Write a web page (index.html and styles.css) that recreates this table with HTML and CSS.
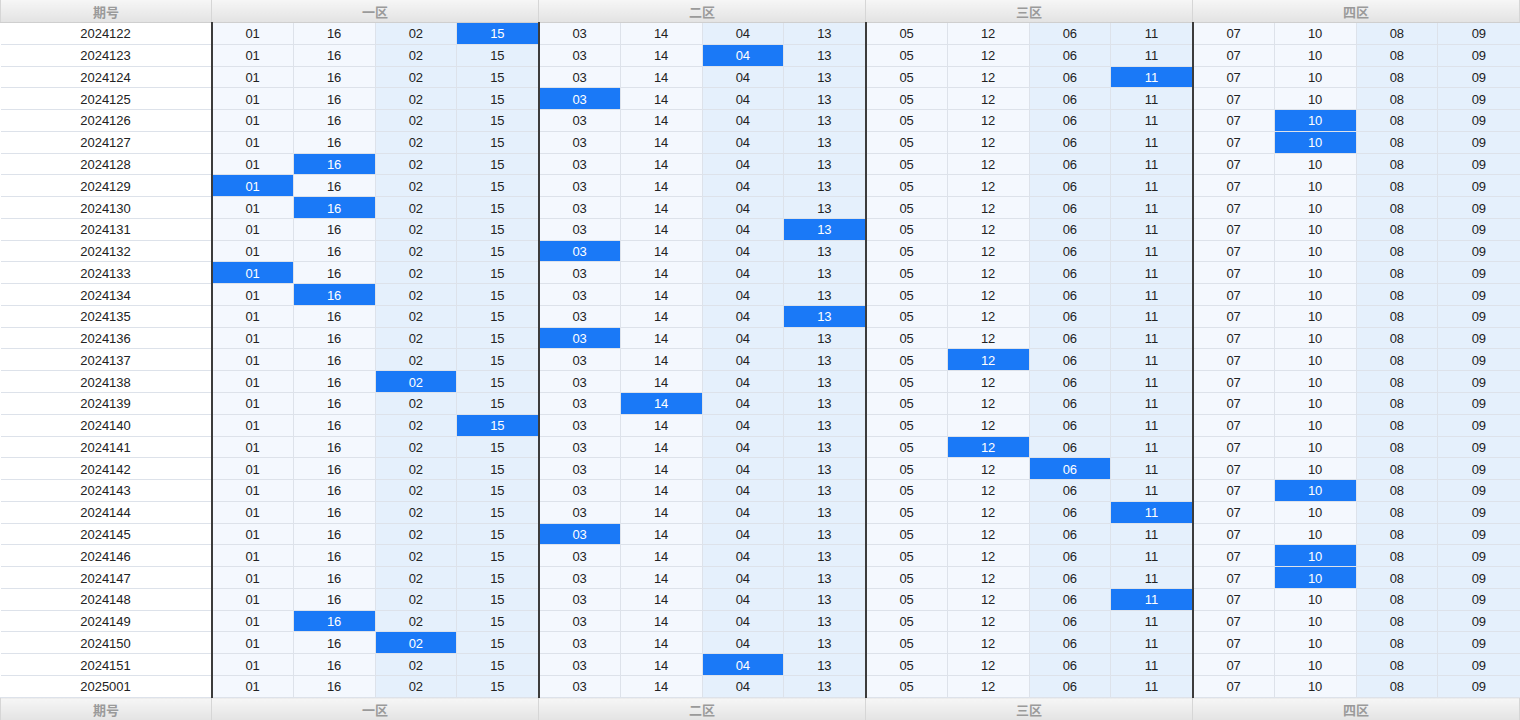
FILE: index.html
```html
<!DOCTYPE html>
<html lang="zh">
<head>
<meta charset="utf-8">
<title>走势表</title>
<link rel="stylesheet" href="styles.css">
</head>
<body>
<table class="grid">
<colgroup><col class="c-issue"><col span="16"></colgroup>
<thead>
<tr><th>期号</th><th colspan="4" class="zone">一区</th><th colspan="4" class="zone">二区</th><th colspan="4" class="zone">三区</th><th colspan="4" class="zone">四区</th></tr>
</thead>
<tbody>
<tr><td>2024122</td><td>01</td><td>16</td><td>02</td><td class="hit">15</td><td>03</td><td>14</td><td>04</td><td>13</td><td>05</td><td>12</td><td>06</td><td>11</td><td>07</td><td>10</td><td>08</td><td>09</td></tr>
<tr><td>2024123</td><td>01</td><td>16</td><td>02</td><td>15</td><td>03</td><td>14</td><td class="hit">04</td><td>13</td><td>05</td><td>12</td><td>06</td><td>11</td><td>07</td><td>10</td><td>08</td><td>09</td></tr>
<tr><td>2024124</td><td>01</td><td>16</td><td>02</td><td>15</td><td>03</td><td>14</td><td>04</td><td>13</td><td>05</td><td>12</td><td>06</td><td class="hit">11</td><td>07</td><td>10</td><td>08</td><td>09</td></tr>
<tr><td>2024125</td><td>01</td><td>16</td><td>02</td><td>15</td><td class="hit">03</td><td>14</td><td>04</td><td>13</td><td>05</td><td>12</td><td>06</td><td>11</td><td>07</td><td>10</td><td>08</td><td>09</td></tr>
<tr><td>2024126</td><td>01</td><td>16</td><td>02</td><td>15</td><td>03</td><td>14</td><td>04</td><td>13</td><td>05</td><td>12</td><td>06</td><td>11</td><td>07</td><td class="hit">10</td><td>08</td><td>09</td></tr>
<tr><td>2024127</td><td>01</td><td>16</td><td>02</td><td>15</td><td>03</td><td>14</td><td>04</td><td>13</td><td>05</td><td>12</td><td>06</td><td>11</td><td>07</td><td class="hit">10</td><td>08</td><td>09</td></tr>
<tr><td>2024128</td><td>01</td><td class="hit">16</td><td>02</td><td>15</td><td>03</td><td>14</td><td>04</td><td>13</td><td>05</td><td>12</td><td>06</td><td>11</td><td>07</td><td>10</td><td>08</td><td>09</td></tr>
<tr><td>2024129</td><td class="hit">01</td><td>16</td><td>02</td><td>15</td><td>03</td><td>14</td><td>04</td><td>13</td><td>05</td><td>12</td><td>06</td><td>11</td><td>07</td><td>10</td><td>08</td><td>09</td></tr>
<tr><td>2024130</td><td>01</td><td class="hit">16</td><td>02</td><td>15</td><td>03</td><td>14</td><td>04</td><td>13</td><td>05</td><td>12</td><td>06</td><td>11</td><td>07</td><td>10</td><td>08</td><td>09</td></tr>
<tr><td>2024131</td><td>01</td><td>16</td><td>02</td><td>15</td><td>03</td><td>14</td><td>04</td><td class="hit">13</td><td>05</td><td>12</td><td>06</td><td>11</td><td>07</td><td>10</td><td>08</td><td>09</td></tr>
<tr><td>2024132</td><td>01</td><td>16</td><td>02</td><td>15</td><td class="hit">03</td><td>14</td><td>04</td><td>13</td><td>05</td><td>12</td><td>06</td><td>11</td><td>07</td><td>10</td><td>08</td><td>09</td></tr>
<tr><td>2024133</td><td class="hit">01</td><td>16</td><td>02</td><td>15</td><td>03</td><td>14</td><td>04</td><td>13</td><td>05</td><td>12</td><td>06</td><td>11</td><td>07</td><td>10</td><td>08</td><td>09</td></tr>
<tr><td>2024134</td><td>01</td><td class="hit">16</td><td>02</td><td>15</td><td>03</td><td>14</td><td>04</td><td>13</td><td>05</td><td>12</td><td>06</td><td>11</td><td>07</td><td>10</td><td>08</td><td>09</td></tr>
<tr><td>2024135</td><td>01</td><td>16</td><td>02</td><td>15</td><td>03</td><td>14</td><td>04</td><td class="hit">13</td><td>05</td><td>12</td><td>06</td><td>11</td><td>07</td><td>10</td><td>08</td><td>09</td></tr>
<tr><td>2024136</td><td>01</td><td>16</td><td>02</td><td>15</td><td class="hit">03</td><td>14</td><td>04</td><td>13</td><td>05</td><td>12</td><td>06</td><td>11</td><td>07</td><td>10</td><td>08</td><td>09</td></tr>
<tr><td>2024137</td><td>01</td><td>16</td><td>02</td><td>15</td><td>03</td><td>14</td><td>04</td><td>13</td><td>05</td><td class="hit">12</td><td>06</td><td>11</td><td>07</td><td>10</td><td>08</td><td>09</td></tr>
<tr><td>2024138</td><td>01</td><td>16</td><td class="hit">02</td><td>15</td><td>03</td><td>14</td><td>04</td><td>13</td><td>05</td><td>12</td><td>06</td><td>11</td><td>07</td><td>10</td><td>08</td><td>09</td></tr>
<tr><td>2024139</td><td>01</td><td>16</td><td>02</td><td>15</td><td>03</td><td class="hit">14</td><td>04</td><td>13</td><td>05</td><td>12</td><td>06</td><td>11</td><td>07</td><td>10</td><td>08</td><td>09</td></tr>
<tr><td>2024140</td><td>01</td><td>16</td><td>02</td><td class="hit">15</td><td>03</td><td>14</td><td>04</td><td>13</td><td>05</td><td>12</td><td>06</td><td>11</td><td>07</td><td>10</td><td>08</td><td>09</td></tr>
<tr><td>2024141</td><td>01</td><td>16</td><td>02</td><td>15</td><td>03</td><td>14</td><td>04</td><td>13</td><td>05</td><td class="hit">12</td><td>06</td><td>11</td><td>07</td><td>10</td><td>08</td><td>09</td></tr>
<tr><td>2024142</td><td>01</td><td>16</td><td>02</td><td>15</td><td>03</td><td>14</td><td>04</td><td>13</td><td>05</td><td>12</td><td class="hit">06</td><td>11</td><td>07</td><td>10</td><td>08</td><td>09</td></tr>
<tr><td>2024143</td><td>01</td><td>16</td><td>02</td><td>15</td><td>03</td><td>14</td><td>04</td><td>13</td><td>05</td><td>12</td><td>06</td><td>11</td><td>07</td><td class="hit">10</td><td>08</td><td>09</td></tr>
<tr><td>2024144</td><td>01</td><td>16</td><td>02</td><td>15</td><td>03</td><td>14</td><td>04</td><td>13</td><td>05</td><td>12</td><td>06</td><td class="hit">11</td><td>07</td><td>10</td><td>08</td><td>09</td></tr>
<tr><td>2024145</td><td>01</td><td>16</td><td>02</td><td>15</td><td class="hit">03</td><td>14</td><td>04</td><td>13</td><td>05</td><td>12</td><td>06</td><td>11</td><td>07</td><td>10</td><td>08</td><td>09</td></tr>
<tr><td>2024146</td><td>01</td><td>16</td><td>02</td><td>15</td><td>03</td><td>14</td><td>04</td><td>13</td><td>05</td><td>12</td><td>06</td><td>11</td><td>07</td><td class="hit">10</td><td>08</td><td>09</td></tr>
<tr><td>2024147</td><td>01</td><td>16</td><td>02</td><td>15</td><td>03</td><td>14</td><td>04</td><td>13</td><td>05</td><td>12</td><td>06</td><td>11</td><td>07</td><td class="hit">10</td><td>08</td><td>09</td></tr>
<tr><td>2024148</td><td>01</td><td>16</td><td>02</td><td>15</td><td>03</td><td>14</td><td>04</td><td>13</td><td>05</td><td>12</td><td>06</td><td class="hit">11</td><td>07</td><td>10</td><td>08</td><td>09</td></tr>
<tr><td>2024149</td><td>01</td><td class="hit">16</td><td>02</td><td>15</td><td>03</td><td>14</td><td>04</td><td>13</td><td>05</td><td>12</td><td>06</td><td>11</td><td>07</td><td>10</td><td>08</td><td>09</td></tr>
<tr><td>2024150</td><td>01</td><td>16</td><td class="hit">02</td><td>15</td><td>03</td><td>14</td><td>04</td><td>13</td><td>05</td><td>12</td><td>06</td><td>11</td><td>07</td><td>10</td><td>08</td><td>09</td></tr>
<tr><td>2024151</td><td>01</td><td>16</td><td>02</td><td>15</td><td>03</td><td>14</td><td class="hit">04</td><td>13</td><td>05</td><td>12</td><td>06</td><td>11</td><td>07</td><td>10</td><td>08</td><td>09</td></tr>
<tr><td>2025001</td><td>01</td><td>16</td><td>02</td><td>15</td><td>03</td><td>14</td><td>04</td><td>13</td><td>05</td><td>12</td><td>06</td><td>11</td><td>07</td><td>10</td><td>08</td><td>09</td></tr>
</tbody>
<tfoot>
<tr><th>期号</th><th colspan="4" class="zone">一区</th><th colspan="4" class="zone">二区</th><th colspan="4" class="zone">三区</th><th colspan="4" class="zone">四区</th></tr>
</tfoot>
</table>
</body>
</html>
```
FILE: styles.css
```css
html, body {
  margin: 0;
  padding: 0;
  background: #ffffff;
}

body {
  font-family: "Liberation Sans", Arial, "Noto Sans CJK SC", sans-serif;
  font-size: 13px;
  color: #222222;
}

.grid {
  width: 1520px;
  height: 720px;
  table-layout: fixed;
  border-collapse: collapse;
  border-spacing: 0;
}

.c-issue {
  width: 211px;
}

.grid th {
  height: 22px;
  padding: 0;
  font-weight: bold;
  font-size: 13px;
  color: #9a9a9a;
  text-align: center;
  background: linear-gradient(#f6f6f6, #e3e3e3);
  border: 1px solid #d6d6d6;
  border-top: 0;
  border-bottom: 1px solid #cfcfcf;
}

.grid tfoot th {
  border-top: 1px solid #d6d6d6;
  border-bottom: 0;
}

.grid th.zone {
  border-left: 1px solid #cfcfcf;
}

.grid td {
  padding: 2px 0 0;
  text-align: center;
  line-height: 18px;
  border: 1px solid #dde2ea;
  background: #ffffff;
}

.grid td:first-child {
  border-left: 0;
  background: #ffffff;
}

.grid td:nth-child(4n+2),
.grid td:nth-child(4n+3) {
  background: #f4f8fe;
}

.grid td:nth-child(4n+4),
.grid td:nth-child(4n+5) {
  background: #e5f0fc;
}

.grid td:nth-child(4n+2) {
  border-left: 2px solid #3c3c3c;
}

.grid td:last-child {
  border-right: 0;
}

.grid td.hit {
  background: #1a79f7;
  color: #ffffff;
}
```
